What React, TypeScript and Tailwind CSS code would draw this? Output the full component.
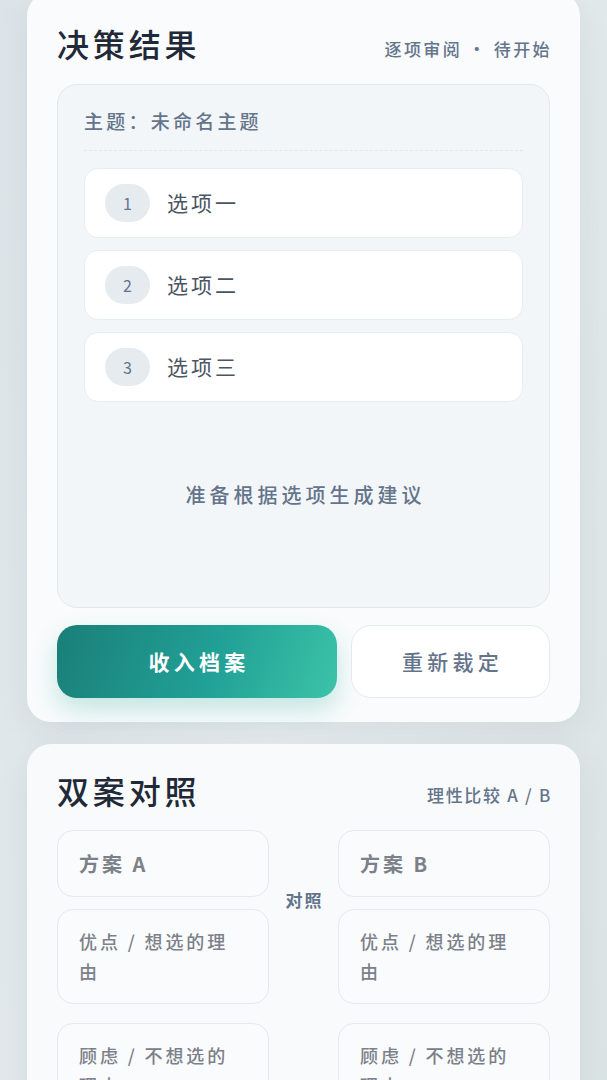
import React from 'react';

const OPTIONS = ['选项一', '选项二', '选项三'];

const font = { fontFamily: '"Noto Sans CJK SC", "Noto Sans", sans-serif' };

function OptionRow({ n, label }: { n: number; label: string }) {
  return (
    <div className="h-[70px] flex items-center gap-[17px] px-[20px] bg-white rounded-[14px] border border-[#e8edf1]">
      <div className="w-[45px] h-[38px] rounded-full bg-[#e6ebf0] flex items-center justify-center text-[16px] text-[#64748b]">
        {n}
      </div>
      <span className="text-[21px] text-[#4b5563] tracking-[0.14em]">{label}</span>
    </div>
  );
}

function Field({ text, tall }: { text: string; tall?: boolean }) {
  if (tall) {
    return (
      <textarea
        placeholder={text}
        className="block w-full h-[95px] resize-none rounded-[16px] border border-[#e5e9ed] bg-[#fafbfc] px-[21px] pt-[16px] text-[18px] leading-[30px] tracking-[0.16em] font-medium placeholder:text-[#7b8089] outline-none"
      />
    );
  }
  return (
    <input
      placeholder={text}
      className="block w-full h-[67px] rounded-[16px] border border-[#e5e9ed] bg-[#fafbfc] px-[21px] text-[20px] tracking-[0.15em] font-semibold placeholder:text-[#7b8089] outline-none"
    />
  );
}

export default function App() {
  return (
    <div
      style={font}
      className="min-h-[1080px] h-[1080px] overflow-hidden bg-[linear-gradient(100deg,#dce4e8_0%,#e9edf0_50%,#dbe4e5_100%)] px-[27px]"
    >
      {/* 决策结果 */}
      <div className="-mt-[8px] rounded-[24px] bg-[#f9fbfc] shadow-[0_10px_30px_rgba(100,120,130,0.12)] px-[30px] pt-[35px] pb-[24px]">
        <div className="flex items-end justify-between">
          <h2 className="text-[32px] leading-[32px] font-medium text-[#1f2937] tracking-[0.12em]">决策结果</h2>
          <span className="text-[17px] leading-[20px] font-medium text-[#64748b] tracking-[0.14em] -mr-[2px]">
            逐项审阅 · 待开始
          </span>
        </div>

        <div className="mt-[25px] h-[524px] flex flex-col rounded-[20px] border border-[#e3e8ec] bg-[#f3f6f8] px-[26px] pt-[23px] pb-[20px]">
          <div className="text-[19px] leading-[26px] font-medium text-[#64748b] tracking-[0.17em]">
            主题：未命名主题
          </div>
          <div className="mt-[16px] border-t border-dashed border-[#e1e6ea]" />
          <div className="mt-[17px] flex flex-col gap-[12px]">
            {OPTIONS.map((o, i) => (
              <OptionRow key={o} n={i + 1} label={o} />
            ))}
          </div>
          <div className="flex-1 flex items-center justify-center pl-[4px] text-[20px] font-medium text-[#64748b] tracking-[0.2em]">
            准备根据选项生成建议
          </div>
        </div>

        <div className="mt-[17px] flex gap-[14px]">
          <button className="w-[280px] h-[73px] rounded-[20px] bg-[linear-gradient(110deg,#1a7f78_0%,#21a096_55%,#3cc3a8_100%)] text-white text-[21px] font-bold tracking-[0.2em] pl-[4px] shadow-[0_12px_24px_rgba(40,170,150,0.25)]">
            收入档案
          </button>
          <button className="flex-1 h-[73px] rounded-[20px] bg-white border border-[#e6eaee] text-[#64748b] text-[21px] font-medium tracking-[0.2em] pl-[4px]">
            重新裁定
          </button>
        </div>
      </div>

      {/* 双案对照 */}
      <div className="mt-[22px] rounded-[24px] bg-[#f8fafb] shadow-[0_10px_30px_rgba(100,120,130,0.12)] px-[30px] pt-[30px] pb-[24px]">
        <div className="flex items-end justify-between">
          <h2 className="text-[32px] leading-[32px] font-medium text-[#1f2937] tracking-[0.12em]">双案对照</h2>
          <span className="text-[17px] leading-[20px] font-medium text-[#64748b] tracking-[0.1em] -mr-[2px] mb-[1px]">
            理性比较 A / B
          </span>
        </div>

        <div className="mt-[24px] grid grid-cols-[212px_1fr_212px]">
          <div className="flex flex-col gap-[12px]">
            <Field text="方案 A" />
            <Field text="优点 / 想选的理由" tall />
            <div className="mt-[7px]">
              <Field text="顾虑 / 不想选的理由" tall />
            </div>
          </div>
          <div className="pt-[60px] pl-[2px] text-center text-[17px] leading-[20px] font-semibold text-[#64748b] tracking-[0.12em]">对照</div>
          <div className="flex flex-col gap-[12px]">
            <Field text="方案 B" />
            <Field text="优点 / 想选的理由" tall />
            <div className="mt-[7px]">
              <Field text="顾虑 / 不想选的理由" tall />
            </div>
          </div>
        </div>
      </div>
    </div>
  );
}
